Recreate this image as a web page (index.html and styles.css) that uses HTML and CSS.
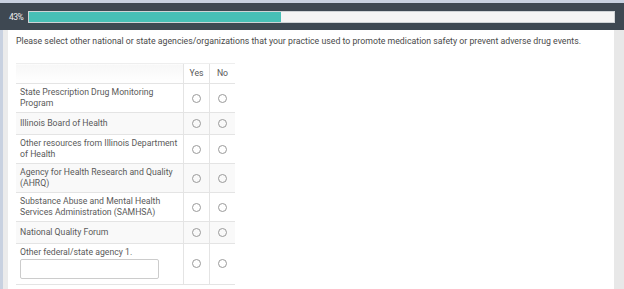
FILE: index.html
```html
<!DOCTYPE html>
<html lang="en">
<head>
  <meta charset="UTF-8" />
  <title>Survey</title>
  <link rel="stylesheet" href="styles.css">
</head>
<body>
  <header class="progress-header">
    <span class="pct">43%</span>
    <div class="track"><div class="fill" style="width: 43.1%;"></div></div>
  </header>
  <div class="page">
    <div class="panel">
      <p class="question">Please select other national or state agencies/organizations that your practice used to promote medication safety or prevent adverse drug events.</p>
      <table class="matrix">
        <thead>
          <tr>
            <th class="label"></th>
            <th>Yes</th>
            <th>No</th>
          </tr>
        </thead>
        <tbody>
          <tr>
            <td class="label">State Prescription Drug Monitoring Program</td>
            <td><span class="radio"></span></td>
            <td><span class="radio"></span></td>
          </tr>
          <tr>
            <td class="label">Illinois Board of Health</td>
            <td><span class="radio"></span></td>
            <td><span class="radio"></span></td>
          </tr>
          <tr>
            <td class="label">Other resources from Illinois Department of Health</td>
            <td><span class="radio"></span></td>
            <td><span class="radio"></span></td>
          </tr>
          <tr>
            <td class="label">Agency for Health Research and Quality (AHRQ)</td>
            <td><span class="radio"></span></td>
            <td><span class="radio"></span></td>
          </tr>
          <tr>
            <td class="label">Substance Abuse and Mental Health Services Administration (SAMHSA)</td>
            <td><span class="radio"></span></td>
            <td><span class="radio"></span></td>
          </tr>
          <tr>
            <td class="label">National Quality Forum</td>
            <td><span class="radio"></span></td>
            <td><span class="radio"></span></td>
          </tr>
          <tr>
            <td class="label">Other federal/state agency 1.<input type="text" class="other-input"></td>
            <td><span class="radio"></span></td>
            <td><span class="radio"></span></td>
          </tr>
        </tbody>
      </table>
    </div>
  </div>
</body>
</html>
```

FILE: styles.css
```css
body {
  margin: 0;
  padding: 0;
  background: #c8d1e0;
  font-family: Roboto, 'Liberation Sans', Arial, sans-serif;
  color: #555;
  height: 289px;
  overflow: hidden;
}
.progress-header {
  margin-top: 3px;
  height: 27px;
  background: #3e4852;
  display: flex;
  align-items: center;
  padding: 0 9px;
}
.pct {
  font-size: 8.5px;
  letter-spacing: -0.5px;
  color: #eee;
  width: 19px;
}
.track {
  width: 585px;
  height: 10px;
  background: #f4f4f4;
  border: 1px solid #cfd3d6;
}
.fill {
  height: 100%;
  background: #47bfb6;
}
.page {
  display: flex;
  padding-left: 3px;
  height: 259px;
}
.panel {
  flex: 1;
  background: #fff;
  border-left: 5px solid #ebebeb;
  border-right: 10px solid #e8e8e8;
  padding: 0 8px;
}
.question {
  margin: 5px 0 0;
  font-size: 8.75px;
  line-height: 12px;
  color: #4a4a4a;
}
.matrix {
  margin-top: 16px;
  border-collapse: collapse;
  font-size: 8.7px;
  line-height: 11px;
  color: #5a5a5a;
}
.matrix th {
  font-weight: normal;
  height: 19px;
  padding: 0;
  border-top: 1px solid #eee;
  border-left: 1px solid #e4e4e4;
  text-align: center;
  width: 25px;
  background: #fff;
}
.matrix th.label {
  border-left: none;
  width: 167px;
  background: linear-gradient(#f7f7f7, #fff);
}
.matrix td {
  padding: 3px 4px;
  border-top: 1px solid #e4e4e4;
  border-left: 1px solid #e4e4e4;
  text-align: center;
  vertical-align: middle;
}
.matrix td.label {
  border-left: none;
  text-align: left;
  padding-right: 0;
}
.matrix tbody tr:nth-child(even) td {
  background: #f9f9f9;
}
.matrix tbody tr:last-child td {
  border-bottom: 1px solid #e4e4e4;
  padding-bottom: 5px;
}
.radio {
  display: inline-block;
  width: 7px;
  height: 7px;
  border: 1px solid #9a9a9a;
  border-radius: 50%;
  margin: 3px 0;
  vertical-align: middle;
}
.other-input {
  display: block;
  box-sizing: border-box;
  width: 139px;
  height: 20px;
  margin-top: 1px;
  border: 1px solid #ccc;
  border-radius: 2px;
}
```
